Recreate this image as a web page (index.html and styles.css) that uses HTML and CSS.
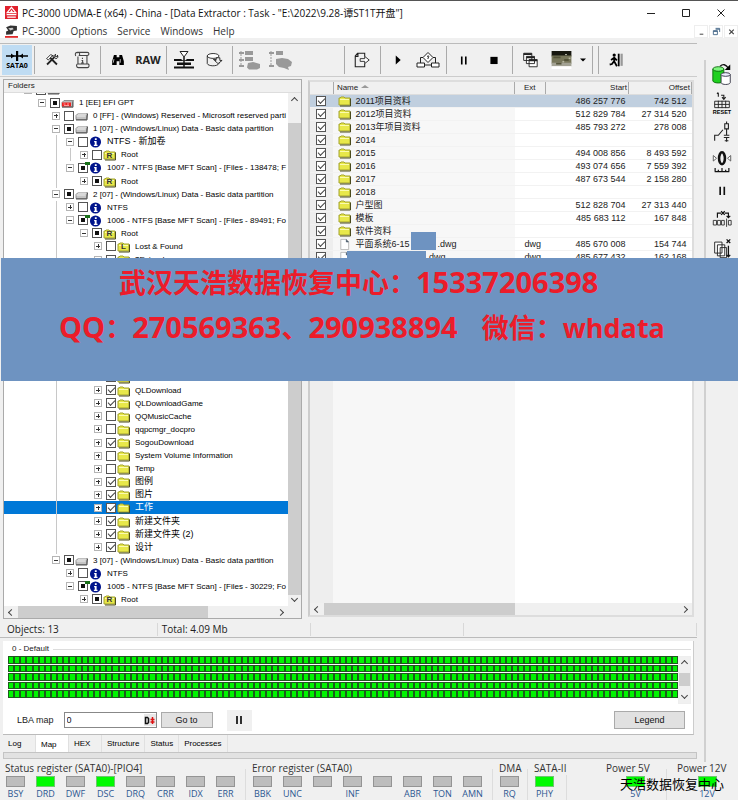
FILE: index.html
```html
<!DOCTYPE html>
<html lang="zh-CN">
<head>
<meta charset="utf-8">
<title>PC-3000 UDMA-E</title>
<link rel="stylesheet" href="styles.css">
<script src="app.js" defer></script>
</head>
<body>
<svg class="defs" aria-hidden="true">
  <symbol id="i-folder" viewBox="0 0 13 11"><path d="M1 2.500h1l1-1h3l1 1h5v7H1z" fill="#e8e84a" stroke="#a3a32c"/><path d="M2 10.500h10.500V3" fill="none" stroke="#4b4b1c"/><path d="M2 4h9" stroke="#fbfbb0"/></symbol>
  <symbol id="i-drive" viewBox="0 0 13 11"><path d="M1 5l2-2h9.500l-1 2v4H1z" fill="#c4c4c4" stroke="#777" stroke-width=".8"/><path d="M1.500 5.500h9M3 3.500h8.500" stroke="#eee"/><path d="M1 9.500h11l.5-6" fill="none" stroke="#444" stroke-width=".9"/></symbol>
  <symbol id="i-reddrive" viewBox="0 0 13 11"><path d="M1 5l2-2h9.500l-1 2v4H1z" fill="#bbb" stroke="#777" stroke-width=".8"/><path d="M1 5h9v4H1z" fill="#e22"/><path d="M2.500 6.500h2M6 6.500h2M3 8h5" stroke="#fbb" stroke-width=".8"/><path d="M1 9.700h11V4" fill="none" stroke="#444" stroke-width=".9"/></symbol>
  <symbol id="i-info" viewBox="0 0 13 13"><circle cx="6.500" cy="6.500" r="6" fill="#00148c"/><path d="M5.800 2.500h2v1.800h-2zM5 5.500h2.700v4h1v1.200H4.700V9.500h1V6.700H5z" fill="#fff"/></symbol>
  <symbol id="i-file" viewBox="0 0 13 13"><path d="M2.500 1.500h6l2.500 2.500v8.500h-8.500z" fill="#fff" stroke="#aaa" stroke-width=".8"/><path d="M8.500 1.500v2.700h2.500" fill="#567" stroke="#456" stroke-width=".8"/></symbol>
</svg>

<div class="window">
  <header class="titlebar">
    <svg class="logo" viewBox="0 0 12 12"><path d="M0 0h12v12H0z" fill="#e0202c"/><path d="M6 1.200l4 5H2zM1.500 8h9M2 10.300h8" fill="none" stroke="#fff" stroke-width="1.100"/><path d="M6 3.500l1.500 2.200h-3z" fill="#fff"/></svg>
    <h1 class="title">PC-3000 UDMA-E (x64) - China - [Data Extractor : Task - "E:\2022\9.28-谭ST1T开盘"]</h1>
    <div class="winbtns">
      <button aria-label="Minimize"><svg viewBox="0 0 10 10"><path d="M1 5.500h8" stroke="#222"/></svg></button>
      <button aria-label="Maximize"><svg viewBox="0 0 10 10"><path d="M1.500 1.500h7v7h-7z" fill="none" stroke="#222"/></svg></button>
      <button aria-label="Close"><svg viewBox="0 0 10 10"><path d="M1.500 1.500l7 7M8.500 1.500l-7 7" stroke="#222"/></svg></button>
    </div>
  </header>
  <nav class="menubar">
    <svg class="logo" viewBox="0 0 12 12"><path d="M1 2l4-1.500 6 .5v4l-3 .5-1 3-6 .5V6l2-1z" fill="#333"/><path d="M3 3l4-.5 1 1.500-3 1z" fill="#ccc"/><path d="M0 11h12" stroke="#d11" stroke-width="1.500"/></svg>
    <button>PC-3000</button><button>Options</button><button>Service</button><button>Windows</button><button>Help</button>
    <div class="mdibtns">
      <button aria-label="Minimize task"><svg viewBox="0 0 10 10"><path d="M3 8h4" stroke="#333"/></svg></button>
      <button aria-label="Restore task"><svg viewBox="0 0 10 10"><path d="M4 1.500h4.500v4M1.500 4h4.500v4.500h-4.500zM1.500 5h4.500M4 2.500h4.500" fill="none" stroke="#468"/></svg></button>
      <button aria-label="Close task"><svg viewBox="0 0 10 10"><path d="M2.500 3l5 5M7.500 3l-5 5" stroke="#444" stroke-width="1.300"/></svg></button>
    </div>
  </nav>

  <div class="workspace">
    <main class="left">
      <div class="toolbar">
        <button class="port"><svg viewBox="0 0 22 10"><path d="M0 5h22" stroke="#000" stroke-width="1.500"/><path d="M5 2.500L8.500 5 5 7.500zM17 2.500L13.500 5 17 7.500zM10 0h2.200v10H10z"/></svg><span>SATA0</span></button>
        <div class="group">
          <button aria-label="Tools"><svg viewBox="0 0 20 20"><path d="M4.500 15L13 6.500M15.500 15L8 7.500" stroke="#222" stroke-width="2"/><path d="M4 8.500L8.500 4l3 1.500-2 .5-3.500 4zM12 5.500l2-2-.5 2.500 2.500.5 0-2c1 2 .5 4-2 4z" fill="#fff" stroke="#222"/></svg></button>
          <button aria-label="Script"><svg viewBox="0 0 20 20"><path d="M3 5.500c-1.500-3.500 1-4 2-4h11c2 0 2.500 3 0 3.500H7c1.500-3-1-4-2.500-3M5.500 6v8.500M15.500 5v9.500M5 14.500h12c1.500 1 1 4-1 4H6c-2.500 0-2.500-4-1-4" fill="none" stroke="#444" stroke-width="1.200"/><path d="M10.500 7.500v1.500M9.500 10.500h1.200v3M9 13.500h3" stroke="#444" stroke-width="1.200" fill="none"/></svg></button>
        </div>
        <div class="group">
          <button aria-label="Find"><svg viewBox="0 0 20 20"><path d="M5.500 4.500h3V7h3V4.500h3l2 7v4h-5v-4h-3v4h-5v-4z"/><path d="M5.500 9l-.8 4M12.500 9v4" stroke="#ccc"/></svg></button>
          <button class="raw">RAW</button>
        </div>
        <div class="group">
          <button aria-label="Filter"><svg class="big" viewBox="0 0 24 20"><path d="M8 1.500h8L12 7z" fill="#fff" stroke="#222"/><path d="M12 7v11" stroke="#111" stroke-width="1.500"/><path d="M2 9h7l2 1.500h2L15 9h7v2H2zM5 12.500h14v2.500H5zM2 16.500h20v2H2z" fill="#111"/></svg></button>
          <button aria-label="Disk"><svg viewBox="0 0 20 20"><ellipse cx="9" cy="5.500" rx="6.500" ry="2.700" fill="#fff" stroke="#222"/><path d="M2.500 5.500v8.500c1 3 11 3.500 13 0v-2.500" fill="none" stroke="#222"/><path d="M9 9.500h3.500V7.500h4v3h2.500L14.500 14l-4-3.500h2" fill="#f0f0f0" stroke="#222"/></svg></button>
        </div>
        <div class="group wide">
          <button aria-label="Mark tree"><svg class="big" viewBox="0 0 24 20"><path d="M3 1v16" stroke="#999" stroke-dasharray="2 1"/><path d="M1 3h5M1 10h5M1 16h5" stroke="#999" stroke-width="2"/><path d="M7 1h8v4H7zM7 7h8v4H7zM10 13l5-1 7 2v4l-3 1.500h-8l-2-2z" fill="#999"/></svg></button>
          <button aria-label="Mark folder"><svg class="big" viewBox="0 0 24 20"><path d="M3 1v16" stroke="#999" stroke-dasharray="2 1"/><path d="M1 3h5M1 16h5" stroke="#999" stroke-width="2"/><path d="M8 1h7v4H8zM8 14V9l6-1 6 1 4 3-1 4-3 1 1 3-5-2-5-1z" fill="#999"/></svg></button>
        </div>
        <div class="group">
          <button aria-label="Export"><svg viewBox="0 0 20 20"><path d="M13 6V2.500H5l-2.500 3V17.500H13V14M5.500 3v3H3" fill="none" stroke="#222" stroke-width="1.200"/><path d="M8 11V8.500h5V6l5 4-5 4v-2.500H8z" fill="#fff" stroke="#222"/></svg></button>
        </div>
        <div class="group">
          <button aria-label="Start"><svg viewBox="0 0 20 20"><path d="M7.500 5l5.500 5-5.500 5z"/></svg></button>
          <button aria-label="Algorithm"><svg class="big" viewBox="0 0 24 20"><path d="M7 7.500H4.500V13M17 7.500h2.500V13M8.500 15h7" fill="none" stroke="#222"/><path d="M12 2.500L17 7.500 12 12.500 7 7.500zM1 13h7.500v4H1zM15.500 13H23v4h-7.500z" fill="#fff" stroke="#222"/><path d="M11 6.500q2-1.500 1.800.3L12 8v1" stroke="#222" fill="none"/></svg></button>
        </div>
        <div class="group">
          <button aria-label="Pause"><svg viewBox="0 0 20 20"><path d="M7.500 6v9M12 6v9" stroke="#000" stroke-width="1.800"/></svg></button>
          <button aria-label="Stop"><svg viewBox="0 0 20 20"><path d="M6 6.500h8v8H6z"/></svg></button>
        </div>
        <div class="group">
          <button aria-label="Windows"><svg viewBox="0 0 20 20"><path d="M3 2.500h9v8H3zM6 6h9v8H6zM9 9.500h9v8H9z" fill="#fff" stroke="#222"/><path d="M3 3.500h9M6 7h9M9 10.500h9" stroke="#222" stroke-width="2"/></svg></button>
          <button class="photo" aria-label="View image"><svg viewBox="0 0 22 20"><path d="M0 0h22v6H0z" fill="#17170f"/><path d="M0 5h22v9H0z" fill="#77765a"/><path d="M0 13h22v4H0z" fill="#a3a294"/><path d="M0 17h22v3H0z" fill="#fff"/><path d="M2 7h8M14 10h5M5 14h6" stroke="#55543a" stroke-width="2"/><path d="M15 4h2M19 8h2M12 12h2" stroke="#ddc"/></svg></button>
          <button class="drop" aria-label="More images"><svg viewBox="0 0 6 6"><path d="M0 1.500h6L3 4.500z"/></svg></button>
        </div>
        <div class="group grip"></div>
        <div class="group">
          <button aria-label="Exit"><svg viewBox="0 0 20 20"><circle cx="8" cy="4.500" r="1.800"/><path d="M8 6.500v5l3 5.500M8 11l-2.500 3.500-2.500.5M8 7.500L4.500 10M8 7.500l3 3" stroke="#000" stroke-width="2" fill="none"/><path d="M12 3h2v14h-2z"/><path d="M15 3h2.500v13.500H15z" fill="#999"/></svg></button>
        </div>
      </div>

      <div class="panes">
        <section class="folders">
          <h2 class="pane-head">Folders</h2>
          <div class="tree-area">
            <div class="tree-clip"><div class="tree" id="tree"></div></div>
            <div class="vscroll"><i class="arrow up"></i><b class="thumb-v"></b><i class="arrow down"></i></div>
          </div>
          <div class="hscroll"><i class="arrow lt"></i><b class="thumb-h"></b><i class="arrow rt"></i><span class="corner"></span></div>
        </section>
        <section class="files">
          <div class="file-area">
            <table>
              <colgroup><col class="c-check"><col><col class="c-ext"><col class="c-start"><col class="c-offset"></colgroup>
              <thead><tr><th></th><th>Name <i class="sort"></i></th><th class="ext">Ext</th><th class="num">Start</th><th class="num">Offset</th></tr></thead>
              <tbody id="rows"></tbody>
            </table>
          </div>
          <div class="hscroll"><i class="arrow lt"></i><b class="thumb-h"></b><i class="arrow rt"></i></div>
        </section>
      </div>

      <div class="statusline"><span>Objects: 13</span><span>Total: 4.09 Mb</span><span></span><span></span></div>

      <section class="map-panel">
        <h2 class="map-title"><span>0 - Default</span></h2>
        <div class="map-area">
          <div class="map" id="map"></div>
          <div class="vscroll"><i class="arrow up"></i><b class="thumb-v"></b><i class="arrow down"></i></div>
        </div>
        <div class="controls">
          <label for="lba">LBA map</label>
          <div class="lba-box"><input id="lba" type="text" value="0"><button aria-label="Number base"><svg viewBox="0 0 11 9"><path d="M1.500 1.500h2l1 1v4l-1 1h-2z" fill="none" stroke="#111" stroke-width="1.500"/><path d="M8.500 1v7M6.500 3.500h4M6.500 6h4" stroke="#d11" stroke-width="1.500"/></svg></button></div>
          <button class="btn goto">Go to</button>
          <button class="pausebtn" aria-label="Pause map"><svg viewBox="0 0 10 10"><path d="M3 1v8M7 1v8" stroke="#000" stroke-width="1.600"/></svg></button>
          <button class="btn legend">Legend</button>
        </div>
      </section>
      <div class="tabs"><button>Log</button><button class="active">Map</button><button>HEX</button><button>Structure</button><button>Status</button><button>Processes</button></div>
      <div class="splitter"></div>
    </main>

    <aside class="sidebar">
      <button aria-label="Copy drive"><svg viewBox="0 0 24 26"><path d="M2 7v13c1 3 11 3 12 0V7" fill="#1fd01f" stroke="#0a6a0a"/><ellipse cx="8" cy="7" rx="6" ry="2.500" fill="#7df57d" stroke="#0a6a0a"/><path d="M11 13v9c1 2.500 9 2.500 10 0v-9" fill="#fff" stroke="#334"/><ellipse cx="16" cy="13" rx="5" ry="2" fill="#eef" stroke="#334"/><path d="M10 4c3-3 6-2 9 2" fill="none" stroke="#111" stroke-width="1.500"/><path d="M21 2v6h-6z"/></svg></button>
      <button aria-label="Reset"><svg viewBox="0 0 24 26"><path d="M8 1.500v4M6.500 2.500L8 1M11 4h3v4M12 6l2 2.500L16 6" fill="none" stroke="#222" stroke-width="1.200"/><path d="M4 10.500h16v7H4zM4 14h16M8 10v8M12 10v8M16 10v8" fill="none" stroke="#222"/><text x="12" y="25" class="reset">RESET</text></svg></button>
      <button aria-label="Power switch"><svg viewBox="0 0 24 26"><path d="M4 22v-6h4l5-6M15 16h4M17 9v7M15 3.500h4V9h-4zM17 1v2M14 16h6M14 18.500h6M17 18v5M15 22h4" fill="none" stroke="#222" stroke-width="1.200"/></svg></button>
      <button aria-label="Recalibrate"><svg viewBox="0 0 24 26"><ellipse cx="12" cy="9.500" rx="3.200" ry="6.500" fill="none" stroke="#111" stroke-width="2.800"/><path d="M2.500 6.500v6l3.500-3zM21.500 6.500v6l-3.500-3z" fill="#fff" stroke="#555"/><path d="M4 24h16M4.500 20v4M8 22v2M12 20v4M16 22v2M19.500 20v4" stroke="#111" fill="none" stroke-width="1.300"/></svg></button>
      <button aria-label="Pause drive"><svg viewBox="0 0 24 26"><path d="M10 9v9M14.500 9v9" stroke="#111" stroke-width="1.800"/></svg></button>
      <button aria-label="Skip sector"><svg viewBox="0 0 24 26"><path d="M7 11V6h4M15 6h4v4M17 9l2 2 2-2M11 4l4 4M15 4l-4 4" fill="none" stroke="#111" stroke-width="1.300"/><path d="M2.500 14h3.500v5H2.500zM7 14h3.500v5H7zM11.500 14h3v5h-3zM17 12v9M19 14h3v5h-3z" fill="none" stroke="#333"/></svg></button>
      <button aria-label="Drop copies"><svg viewBox="0 0 24 26"><path d="M4 6h8v12H4zM7 9h8v12H7zM10 12h7v11h-7z" fill="#fff" stroke="#222"/><path d="M17 3l4 4M21 3l-4 4M19 10v12M17 20l2 2 2-2" stroke="#111" fill="none" stroke-width="1.400"/></svg></button>
    </aside>
  </div>

  <footer class="registers">
    <fieldset class="wide8"><legend>Status register (SATA0)-[PIO4]</legend><div><span>BSY</span><span class="on">DRD</span><span>DWF</span><span class="on">DSC</span><span>DRQ</span><span>CRR</span><span>IDX</span><span>ERR</span></div></fieldset>
    <fieldset class="wide8"><legend>Error register (SATA0)</legend><div><span>BBK</span><span>UNC</span><span></span><span>INF</span><span></span><span>ABR</span><span>TON</span><span>AMN</span></div></fieldset>
    <fieldset><legend>DMA</legend><div><span>RQ</span></div></fieldset>
    <fieldset class="sata"><legend>SATA-II</legend><div><span class="on">PHY</span></div></fieldset>
    <fieldset class="power"><legend>Power 5V</legend><div><span class="on">5V</span></div></fieldset>
    <fieldset class="power"><legend>Power 12V</legend><div><span class="on">12V</span></div></fieldset>
  </footer>

  <div class="banner">
    <p>武汉天浩数据恢复中心：<span>15337206398</span></p>
    <p><span>QQ</span>：<span>270569363</span>、<span>290938894</span><span class="wechat">微信：whdata</span></p>
  </div>
  <div class="watermark">天浩数据恢复中心</div>
</div>
</body>
</html>
```
FILE: styles.css
```css
* { box-sizing: border-box; }
body { margin: 0; background: #f0f0f0; color: #222; font: 9px/13px "Liberation Sans", "Noto Sans CJK SC", sans-serif; }
button { border: 0; padding: 0; background: none; font: inherit; color: inherit; }
h1, h2, p { margin: 0; font-weight: inherit; font-size: inherit; }
.defs { display: none; }
.window { position: relative; min-height: 100vh; display: flex; flex-direction: column; overflow: hidden; }

.titlebar { display: flex; align-items: center; height: 24px; background: #fff; border-top: 1px solid #555; padding-left: 5px; }
.logo { width: 13px; height: 13px; flex: none; }
.title { margin-left: 4px; white-space: nowrap; font: 10px/16px "Open Sans", "Noto Sans CJK SC", sans-serif; color: #111; }
.winbtns { margin-left: auto; display: flex; }
.winbtns button { width: 35px; height: 20px; display: grid; place-items: center; }
.winbtns svg { width: 10px; height: 10px; }
.menubar { display: flex; align-items: center; height: 14px; background: #fff; padding-left: 5px; font: 10px/14px "Open Sans", sans-serif; color: #333; }
.menubar > button { margin-left: 10px; }
.menubar > .logo + button { margin-left: 4px; }
.mdibtns { margin-left: auto; display: flex; gap: 1px; }
.mdibtns button { width: 14px; height: 13px; display: grid; place-items: center; border: 1px solid #eee; }
.mdibtns svg { width: 9px; height: 9px; }

.workspace { flex: 1; display: flex; min-height: 0; }
.left { flex: 1; min-width: 0; display: flex; flex-direction: column; }

.toolbar { display: flex; height: 34px; margin-top: 5px; padding: 1px 0 1px 2px; border-top: 1px solid #bbb; border-bottom: 1px solid #ccc; margin-bottom: 2px; }
.port { width: 30px; margin-right: 2px; background: #bfdcf3; display: flex; flex-direction: column; align-items: center; justify-content: center; font: bold 7px/9px "Open Sans", sans-serif; color: #000; }
.port svg { width: 22px; height: 10px; }
.group { display: flex; border-left: 1px solid #aaa; padding: 0 3px 0 2px; margin: 1px 0; }
.group button { width: 30px; display: grid; place-items: center; }
.group svg { width: 18px; height: 18px; }
.group svg.big { width: 24px; height: 20px; }
.group.wide { width: 112px; }
.group .raw { font: bold 11px/14px "Open Sans", sans-serif; color: #222; }
.group .photo { width: 32px; }
.group .photo svg { width: 21px; height: 18px; }
.group .drop { width: 12px; }
.group .drop svg { width: 6px; height: 6px; }
.grip { width: 6px; padding: 0; }

.panes { flex: 1; min-height: 0; display: flex; gap: 6px; padding: 0 3px; }
.folders { flex: 300; min-width: 0; display: flex; flex-direction: column; background: #fff; border: 1px solid #aaa; margin-bottom: 1px; }
.pane-head { height: 13px; padding-left: 4px; line-height: 12px; background: #f0f0f0; border-bottom: 1px solid #ddd; position: relative; font-size: 8px; }
.tree-area { flex: 1; min-height: 0; display: flex; }
.tree-clip { flex: 1; min-width: 0; overflow: hidden; display: flex; }
.tree { flex: 1; min-width: 0; margin-top: -10px; display: grid; grid-auto-rows: minmax(0, 1fr); font-size: 8px; color: #000; }
.node { display: flex; align-items: center; padding-left: 20px; min-width: 0; white-space: nowrap; overflow: hidden; }
.node.cjk { font-size: 9px; }
.guide { width: 14px; flex: none; align-self: stretch; background: linear-gradient(#c8c8c8, #c8c8c8) 4px 0 / 1px 0 no-repeat; }
.guide.line { background-size: 1px 100%; }
.expander { position: relative; width: 8px; height: 8px; flex: none; margin-right: 4px; border: 1px solid #b5b5b5; background: #fff linear-gradient(#333, #333) center / 4px 1px no-repeat; }
.expander.plus { background: linear-gradient(#333, #333) center / 4px 1px no-repeat, linear-gradient(#333, #333) center / 1px 4px no-repeat, #fff; }
.node label { display: flex; align-items: center; }
input[type="checkbox"] { appearance: none; margin: 0; flex: none; width: 10px; height: 10px; border: 1px solid #555; background: #fff; display: grid; place-items: center; }
input[type="checkbox"]:checked::before { content: ""; width: 6px; height: 3px; margin-top: -2px; border: solid #444; border-width: 0 0 1px 1px; transform: rotate(-45deg); }
input.mixed::before { content: ""; width: 4px; height: 4px; background: #111; }
.icon { position: relative; width: 13px; height: 11px; margin: 0 5px 0 1px; flex: none; display: grid; place-items: center; }
.icon svg { width: 13px; height: 12px; grid-area: 1 / 1; }
.icon b { grid-area: 1 / 1; font: bold 8px/9px "Liberation Sans", sans-serif; z-index: 1; color: #333; }
.node.selected { background: #0078d7; color: #fff; }
.scan .icon::before { content: ""; position: absolute; left: -4px; top: 0; width: 5px; height: 3px; background: #187018; z-index: 1; }

.vscroll { width: 13px; flex: none; background: #f0f0f0; display: flex; flex-direction: column; align-items: center; }
.thumb-v { width: 100%; background: #cdcdcd; }
.folders .thumb-v { flex: 1; margin: 20px 0 1px; }
.arrow { flex: none; width: 5px; height: 5px; border: solid #444; border-width: 1px 0 0 1px; }
.up { transform: rotate(45deg); margin-top: 5px; }
.down { transform: rotate(225deg); margin-bottom: 5px; }
.lt { transform: rotate(-45deg); margin: 0 4px 0 5px; }
.rt { transform: rotate(135deg); margin: 0 5px 0 auto; }
.hscroll { height: 12px; flex: none; display: flex; align-items: center; background: #f0f0f0; }
.thumb-h { width: 64%; height: 100%; background: #cdcdcd; }
.corner { width: 13px; }
.files { flex: 385; min-width: 0; display: flex; flex-direction: column; margin: 1px 0 3px; border: 2px solid #ddd; border-left-color: #ccc; background: #fff; }
.files .thumb-h { width: 50%; }
.file-area { flex: 1; min-height: 0; overflow: hidden; background: linear-gradient(90deg, #eee 23px, #f7f7f7 23px, #f7f7f7 calc(100% - 177px), #fff calc(100% - 177px)); }
table { width: 100%; border-collapse: collapse; table-layout: fixed; }
.c-check { width: 23px; }
.c-ext { width: 31px; }
.c-start { width: 83px; }
.c-offset { width: 63px; }
th { height: 12px; padding: 0 3px; font-weight: normal; font-size: 8px; text-align: left; line-height: 11px; background: #f0f0f0; border-right: 1px solid #aaa; border-bottom: 1px solid #ddd; }
th.num { text-align: right; padding: 0 1px; }
th.ext { padding-left: 9px; }
.sort { display: inline-block; border: solid transparent; border-width: 0 4px 3px; border-bottom-color: #999; margin: 0 0 2px 1px; }
td { height: 13px; padding: 0; line-height: 12px; border-bottom: 1px solid #f2f2f2; white-space: nowrap; overflow: hidden; }
td.num { text-align: right; padding-right: 3px; }
td:last-child { padding-right: 5px; }
td.ext { padding-left: 10px; }
td input[type="checkbox"] { margin: 0 auto 0 6px; }
tr.selected td { background: #c0cfdf; }
.file { display: flex; align-items: center; height: 12px; padding-left: 5px; }
.file .icon { margin: 0 4px 0 0; }
.mask { width: 25px; height: 18px; background: #6e93c1; margin: -6px 1px 0 2px; }
.mask.long { width: 79px; height: 12px; margin: 0 0 0 -8px; position: relative; }
.show td { overflow: visible; }

.statusline { display: grid; grid-template-columns: 155fr 153fr 154fr 233fr; height: 18px; padding: 3px 0 2px 3px; border-bottom: 1px solid #bbb; font: 10px/13px "Open Sans", sans-serif; }
.statusline span { padding-left: 4px; border-right: 1px solid #d8d8d8; }

.map-panel { margin: 3px 3px 0; padding: 3px 2px 0 5px; background: #fff; border-bottom: 1px solid #bbb; border-right: 1px solid #ccc; }
.map-title { height: 12px; line-height: 10px; font-size: 8px; background: linear-gradient(#ddd, #ddd) 0 5px / 100% 1px no-repeat; }
.map-title span { background: #fff; padding: 0 4px; }
.map-area { display: flex; height: 48px; }
.map { flex: 1; height: 42px; display: grid; grid-template: repeat(5, 1fr) / repeat(109, 1fr); row-gap: 1px; }
.map i { background: #00f400; border: 1px solid #1d5a1d; }
.map-area .vscroll { justify-content: space-between; border: 1px solid #eee; }
.map-area .thumb-v { height: 13px; }
.map-area .up { margin-top: 4px; }
.controls { display: flex; align-items: center; height: 30px; padding: 2px 6px 0 9px; }
.lba-box { display: flex; align-items: center; width: 93px; height: 16px; margin-left: 10px; border: 1px solid #888; background: #fff; }
.lba-box input { flex: 1; min-width: 0; height: 12px; border: 0; padding: 0 2px; font: inherit; color: #111; }
.lba-box button { width: 12px; height: 12px; background: #e8e8e8; display: grid; place-items: center; }
.lba-box svg { width: 11px; height: 9px; }
.btn { height: 16px; background: #e1e1e1; border: 1px solid #aaa; line-height: 12px; color: #111; }
.goto { width: 52px; margin-left: 4px; }
.pausebtn { width: 25px; height: 21px; margin-left: 14px; background: #f0f0f0; display: grid; place-items: center; }
.pausebtn svg { width: 10px; height: 10px; }
.legend { width: 71px; height: 18px; margin-left: auto; }
.tabs { display: flex; height: 17px; padding-left: 3px; font-size: 8px; color: #000; }
.tabs button { min-width: 33px; padding: 0 5px; text-align: left; border-right: 1px solid #e0e0e0; }
.tabs .active { background: #fff; padding-top: 2px; }
.splitter { height: 7px; margin: 0 0 3px 3px; background: #e2e2e2; border: 1px solid #c4c4c4; }

.sidebar { width: 34px; margin: 22px 0 0 7px; border-left: 2px solid #d0d0d0; display: flex; flex-direction: column; padding: 1px 3px; gap: 3px; }
.sidebar button { height: 26px; display: grid; place-items: center; }
.sidebar svg { width: 22px; height: 25px; }
.reset { font: bold 6px "Liberation Sans", sans-serif; text-anchor: middle; }

.registers { display: flex; padding: 0 0 0 4px; height: 38px; font: 9px/12px "Open Sans", sans-serif; }
fieldset { flex: none; width: 30px; margin: 0 5px 0 0; padding: 0; border: 0 solid #ddd; border-right-width: 1px; min-width: 0; }
fieldset.wide8 { width: 242px; }
fieldset div { display: flex; }
legend { padding: 0 1px; font-size: 10px; line-height: 13px; color: #333; white-space: nowrap; }
fieldset span { flex: none; width: 30px; display: flex; flex-direction: column; align-items: center; color: #2d5790; padding-right: 7px; }
fieldset span::before { content: ""; width: 17px; height: 9px; margin: 1px 0; background: #bdbdbd; border: 1px solid #949494; flex: none; }
fieldset span.on::before { background: #00fa00; border-color: #6fc76f; }
fieldset.sata { width: 34px; margin-right: 34px; }
fieldset.power { width: 66px; padding-left: 4px; }
fieldset.power:last-of-type { border-right: 0; }
.power div { justify-content: center; }
.power span { padding: 0; }

.banner { position: absolute; top: 258px; left: 1px; right: 0; height: 123px; background: #6e93c1; color: #ec1c2a; font: bold 27px/45px "Noto Sans CJK SC", sans-serif; white-space: nowrap; padding-top: 1px; }
.banner p { height: 45px; padding-left: 58px; }
.banner p:first-child { padding-left: 118px; }
.banner span { font: bold 29px/45px "Open Sans", "Noto Sans CJK SC", sans-serif; }
.banner .wechat { font-size: 27px; margin-left: 24px; }
.watermark { position: absolute; right: 14px; bottom: 8px; font: 13px/16px "Noto Sans CJK SC", sans-serif; color: #000; }
```
FILE: app.js
```js
// level, expander, checkbox state (0 empty, 1 checked, 2 mixed), icon, label
const nodes = [
  [0, '-', 2, 'drive', '0 - 1 00000 SATA0'],
  [1, '-', 2, 'reddrive', '1 [EE] EFI GPT'],
  [2, '+', 0, 'drive', '0 [FF] - (Windows) Reserved - Microsoft reserved parti'],
  [2, '-', 2, 'drive', '1 [07] - (Windows/Linux) Data - Basic data partition'],
  [3, '-', 0, 'info', 'NTFS - 新加卷'],
  [4, '+', 0, 'R', 'Root'],
  [3, '-', 2, 'scan', '1007 - NTFS [Base MFT Scan] - [Files - 138478; F'],
  [4, '+', 2, 'R', 'Root'],
  [2, '-', 2, 'drive', '2 [07] - (Windows/Linux) Data - Basic data partition'],
  [3, '+', 0, 'info', 'NTFS'],
  [3, '-', 2, 'scan', '1006 - NTFS [Base MFT Scan] - [Files - 89491; Fo'],
  [4, '-', 2, 'R', 'Root'],
  [5, '+', 0, 'L', 'Lost & Found'],
  [5, '+', 0, 'folder', '$Extend'],
  ...Array.from({ length: 9 }, () => [5, '+', 0, 'folder', '']),
  [5, '+', 1, 'folder', 'QLDownload'],
  [5, '+', 1, 'folder', 'QLDownloadGame'],
  [5, '+', 0, 'folder', 'QQMusicCache'],
  [5, '+', 0, 'folder', 'qqpcmgr_docpro'],
  [5, '+', 1, 'folder', 'SogouDownload'],
  [5, '+', 0, 'folder', 'System Volume Information'],
  [5, '+', 0, 'folder', 'Temp'],
  [5, '+', 1, 'folder', '图例'],
  [5, '+', 1, 'folder', '图片'],
  [5, '+', 1, 'folder', '工作', true],
  [5, '+', 1, 'folder', '新建文件夹'],
  [5, '+', 1, 'folder', '新建文件夹 (2)'],
  [5, '+', 1, 'folder', '设计'],
  [2, '-', 2, 'drive', '3 [07] - (Windows/Linux) Data - Basic data partition'],
  [3, '+', 0, 'info', 'NTFS'],
  [3, '-', 2, 'scan', '1005 - NTFS [Base MFT Scan] - [Files - 30229; Fo'],
  [4, '+', 2, 'R', 'Root'],
];

const files = [
  ['2011项目资料', '', '486 257 776', '742 512'],
  ['2012项目资料', '', '512 829 784', '27 314 520'],
  ['2013年项目资料', '', '485 793 272', '278 008'],
  ['2014', '', '', ''],
  ['2015', '', '494 008 856', '8 493 592'],
  ['2016', '', '493 074 656', '7 559 392'],
  ['2017', '', '487 673 544', '2 158 280'],
  ['2018', '', '', ''],
  ['户型图', '', '512 828 704', '27 313 440'],
  ['模板', '', '485 683 112', '167 848'],
  ['软件资料', '', '', ''],
  ['平面系统6-15<span class="mask"></span>.dwg', 'dwg', '485 670 008', '154 744'],
  ['<span class="mask long"></span>.dwg', 'dwg', '485 677 432', '162 168'],
];

const use = (id) => `<svg><use href="#i-${id}"/></svg>`;

// A guide runs through a row when a later sibling exists at that level.
const continues = (index, level) => {
  for (let i = index + 1; i < nodes.length; i++) {
    if (nodes[i][0] < level) return false;
    if (nodes[i][0] === level) return true;
  }
  return false;
};

document.getElementById('tree').innerHTML = nodes.map(([level, exp, state, icon, text, selected], index) => {
  let guides = '';
  for (let l = 0; l < level; l++) guides += `<span class="guide${continues(index, l) ? ' line' : ''}"></span>`;
  const letter = icon.length === 1;
  const shape = letter ? 'folder' : icon === 'scan' ? 'info' : icon;
  const label = text.replace('&', '&amp;');
  const classes = ['node', selected && 'selected', icon === 'scan' && 'scan', /[\u4e00-\u9fff]/.test(text) && 'cjk'];
  return `<div class="${classes.filter(Boolean).join(' ')}">${guides}` +
    `<span class="expander${exp === '+' ? ' plus' : ''}"></span><label>` +
    `<input type="checkbox"${state === 1 ? ' checked' : ''}${state === 2 ? ' class="mixed"' : ''}>` +
    `<span class="icon">${use(shape)}${letter ? `<b>${icon}</b>` : ''}</span>${label}</label></div>`;
}).join('');

document.getElementById('rows').innerHTML = files.map(([name, ext, start, offset], i) =>
  `<tr class="${i === 0 ? 'selected' : ''}${ext ? ' show' : ''}"><td><input type="checkbox" checked aria-label="Select row ${i + 1}"></td>` +
  `<td><div class="file"><span class="icon">${use(ext ? 'file' : 'folder')}</span>${name}</div></td>` +
  `<td class="ext">${ext}</td><td class="num">${start}</td><td class="num">${offset}</td></tr>`).join('');

document.getElementById('map').innerHTML = '<i></i>'.repeat(545);
```
